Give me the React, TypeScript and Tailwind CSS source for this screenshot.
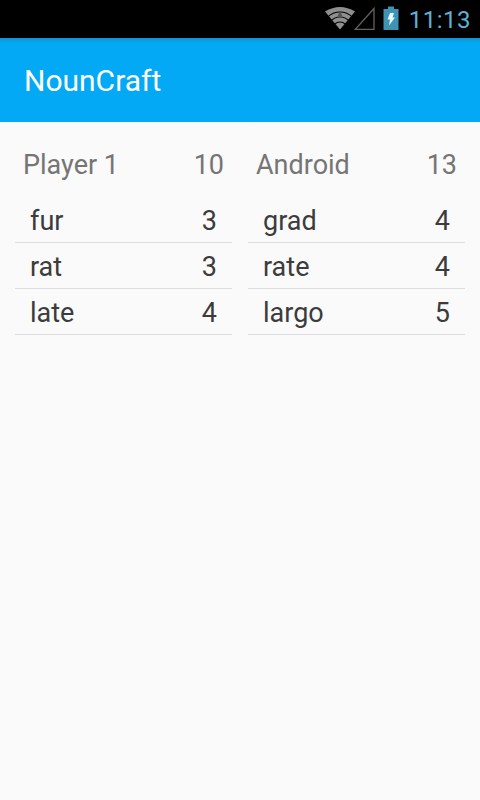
const players = [
  {
    name: "Player 1",
    score: 10,
    words: ["fur", "rat", "late"],
  },
  {
    name: "Android",
    score: 13,
    words: ["grad", "rate", "largo"],
  },
];

function StatusBar() {
  return (
    <div className="flex h-[38px] items-center justify-end bg-black pr-[9px] text-[#5cb2d6]">
      <svg width="50" height="26" viewBox="0 0 50 26" className="mr-2">
        <path d="M0 5.5Q15 -3.500 30 5.5L15 23.5Z" fill="#8f8f8f" />
        <g fill="none" stroke="#000" strokeWidth="1.200">
          <circle cx="15" cy="23.5" r="17.500" />
          <circle cx="15" cy="23.5" r="12.500" />
          <circle cx="15" cy="23.5" r="7.500" />
        </g>
        <path d="M15 5L18 11.500H12Z" fill="#555" />
        <path d="M49 2.500V23.300H30.300Z" fill="#000" stroke="#626262" strokeWidth="1.300" />
      </svg>
      <svg width="16" height="26" viewBox="0 0 16 26" className="mr-[10px]">
        <path d="M5 0.500H11V3H15.500V24H0.500V3H5Z" fill="#3f94b5" />
        <path d="M7 7H11L9.500 11.500H12L6 19.500L7 13.500H4.500Z" fill="#e6fbff" />
      </svg>
      <span className="pt-px text-2xl tracking-[0.5px]">11:13</span>
    </div>
  );
}

export default function App() {
  return (
    <div className="min-h-screen bg-[#fafafa] font-['Roboto',sans-serif]">
      <StatusBar />
      <header className="flex h-[84px] items-center bg-[#03a9f4] bg-linear-to-b from-[#148fd0] to-[#03a9f4] to-[5px] pl-6 text-[30px] text-white">
        NounCraft
      </header>
      <main className="flex gap-4 px-[15px] pt-[20px]">
        {players.map((player) => (
          <section key={player.name} className="flex-1">
            <div className="flex h-[46px] items-center justify-between px-2 text-[27px] text-[#757575]">
              <span>{player.name}</span>
              <span>{player.score}</span>
            </div>
            <ul className="pt-[9px]">
              {player.words.map((word) => (
                <li
                  key={word}
                  className="flex h-[46px] items-center justify-between border-b border-[#dedede] px-[15px] pt-1 text-[27px] text-[#3c3c3c]"
                >
                  <span>{word}</span>
                  <span>{word.length}</span>
                </li>
              ))}
            </ul>
          </section>
        ))}
      </main>
    </div>
  );
}
